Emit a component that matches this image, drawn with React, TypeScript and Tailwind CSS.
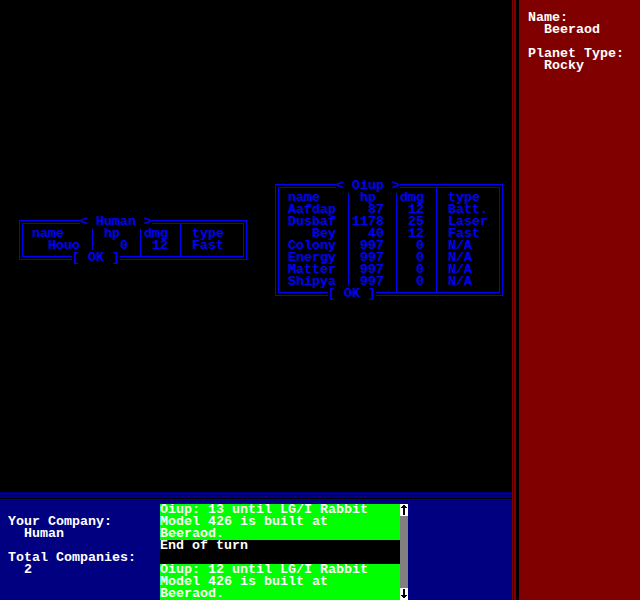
import React from 'react';

type Unit = { name: string; hp: string; dmg: string; type: string };

const HUMAN: Unit[] = [{ name: 'Houo', hp: '0', dmg: '12', type: 'Fast' }];

const OIUP: Unit[] = [
  { name: 'Aafdap', hp: '87', dmg: '12', type: 'Batt.' },
  { name: 'Dusbaf', hp: '1178', dmg: '25', type: 'Laser' },
  { name: 'Bey', hp: '40', dmg: '12', type: 'Fast' },
  { name: 'Colony', hp: '997', dmg: '0', type: 'N/A' },
  { name: 'Energy', hp: '997', dmg: '0', type: 'N/A' },
  { name: 'Matter', hp: '997', dmg: '0', type: 'N/A' },
  { name: 'Shipya', hp: '997', dmg: '0', type: 'N/A' },
];

const MESSAGES = [
  { text: 'Oiup: 13 until LG/I Rabbit', bg: 'bg-[#00ff00]' },
  { text: 'Model 426 is built at', bg: 'bg-[#00ff00]' },
  { text: 'Beeraod.', bg: 'bg-[#00ff00]' },
  { text: 'End of turn', bg: 'bg-black' },
  { text: '', bg: 'bg-black' },
  { text: 'Oiup: 12 until LG/I Rabbit', bg: 'bg-[#00ff00]' },
  { text: 'Model 426 is built at', bg: 'bg-[#00ff00]' },
  { text: 'Beeraod.', bg: 'bg-[#00ff00]' },
];

// write text into a 29-cell wide line at the given column
function cells(parts: [string, number][]) {
  const line = Array(29).fill(' ');
  parts.forEach(([text, col]) => {
    text.split('').forEach((ch, i) => (line[col + i] = ch));
  });
  return line.join('');
}

function unitLine(u: Unit) {
  return cells([
    [u.name.slice(0, 6).padStart(6), 2],
    [u.hp.padStart(4), 10],
    [u.dmg.padStart(3), 16],
    [u.type, 22],
  ]);
}

/** Text-mode combat box: double frame, title on top, [ OK ] on the bottom. */
function UnitDialog({ title, units, className }: { title: string; units: Unit[]; className: string }) {
  const rows = units.length + 3;
  const fb = 12 * (rows - 1);
  const blue = '#0000ff';

  return (
    <div className={`absolute w-[232px] text-[#0000ff] ${className}`}>
      <svg className="absolute inset-0" width={232} height={rows * 12} shapeRendering="crispEdges">
        {/* outer frame */}
        <rect x={3} y={4} width={228} height={1} fill={blue} />
        <rect x={3} y={fb + 7} width={228} height={1} fill={blue} />
        <rect x={3} y={4} width={1} height={fb + 4} fill={blue} />
        <rect x={230} y={4} width={1} height={fb + 4} fill={blue} />
        {/* inner frame */}
        <rect x={6} y={7} width={222} height={1} fill={blue} />
        <rect x={6} y={fb + 4} width={222} height={1} fill={blue} />
        <rect x={6} y={7} width={1} height={fb - 2} fill={blue} />
        <rect x={227} y={7} width={1} height={fb - 2} fill={blue} />
        {/* column separators */}
        <rect x={76} y={12} width={1} height={fb - 12} fill={blue} />
        <rect x={124} y={12} width={1} height={fb - 8} fill={blue} />
        <rect x={164} y={7} width={1} height={fb - 3} fill={blue} />
      </svg>
      <div className="relative whitespace-pre">
        <div className="h-[12px]">
          {'        '}
          <span className="bg-black">{`< ${title} >`}</span>
        </div>
        <div className="h-[12px]">
          {cells([
            ['name', 2],
            ['hp', 11],
            ['dmg', 16],
            ['type', 22],
          ])}
        </div>
        {units.map((u) => (
          <div key={u.name} className="h-[12px]">
            {unitLine(u)}
          </div>
        ))}
        <div className="h-[12px]">
          {'       '}
          <span className="bg-black">[ OK ]</span>
        </div>
      </div>
    </div>
  );
}

function ArrowCell({ down }: { down?: boolean }) {
  return (
    <div className="h-[12px] bg-white">
      <svg width={8} height={12} viewBox="0 0 8 12" shapeRendering="crispEdges">
        {down ? (
          <>
            <rect x={3} y={1} width={2} height={8} fill="#000" />
            <rect x={1} y={7} width={6} height={1} fill="#000" />
            <rect x={2} y={8} width={4} height={1} fill="#000" />
            <rect x={3} y={9} width={2} height={1} fill="#000" />
          </>
        ) : (
          <>
            <rect x={3} y={1} width={2} height={1} fill="#000" />
            <rect x={2} y={2} width={4} height={1} fill="#000" />
            <rect x={1} y={3} width={6} height={1} fill="#000" />
            <rect x={3} y={3} width={2} height={8} fill="#000" />
          </>
        )}
      </svg>
    </div>
  );
}

export default function App() {
  return (
    <div className="flex h-[600px] w-[640px] overflow-hidden bg-black font-['Liberation_Mono',monospace] text-[13.33px] font-bold leading-[12px]">
      {/* Left: map + status bar */}
      <div className="flex w-[512px] flex-col">
        <div className="relative h-[492px] bg-black">
          <UnitDialog title="Human" units={HUMAN} className="left-[16px] top-[216px]" />
          <UnitDialog title="Oiup" units={OIUP} className="left-[272px] top-[180px]" />
        </div>

        <div className="flex h-[108px] flex-col bg-[#000080] text-white">
          <div className="h-[12px] pt-[3px]">
            <div className="h-[4px] border-y border-black" />
          </div>
          <div className="flex flex-1">
            <div className="w-[160px] whitespace-pre pl-[8px] pt-[12px]">
              <div className="h-[12px]">Your Company:</div>
              <div className="h-[12px]">{'  Human'}</div>
              <div className="h-[12px]" />
              <div className="h-[12px]">Total Companies:</div>
              <div className="h-[12px]">{'  2'}</div>
            </div>
            <div className="w-[240px] whitespace-pre">
              {MESSAGES.map((m, i) => (
                <div key={i} className={`h-[12px] ${m.bg}`}>
                  {m.text}
                </div>
              ))}
            </div>
            <div className="flex w-[8px] flex-col">
              <ArrowCell />
              <div className="flex-1 bg-[#808080]" />
              <ArrowCell down />
            </div>
          </div>
        </div>
      </div>

      {/* Right: planet info */}
      <div className="flex flex-1 bg-[#800000]">
        <div className="w-px bg-[#800000]" />
        <div className="w-px bg-black" />
        <div className="w-[2px] bg-[#800000]" />
        <div className="w-[3px] bg-black" />
        <div className="flex-1 whitespace-pre pl-[9px] pt-[12px] text-white">
          <div className="h-[12px]">Name:</div>
          <div className="h-[12px]">{'  Beeraod'}</div>
          <div className="h-[12px]" />
          <div className="h-[12px]">Planet Type:</div>
          <div className="h-[12px]">{'  Rocky'}</div>
        </div>
      </div>
    </div>
  );
}
